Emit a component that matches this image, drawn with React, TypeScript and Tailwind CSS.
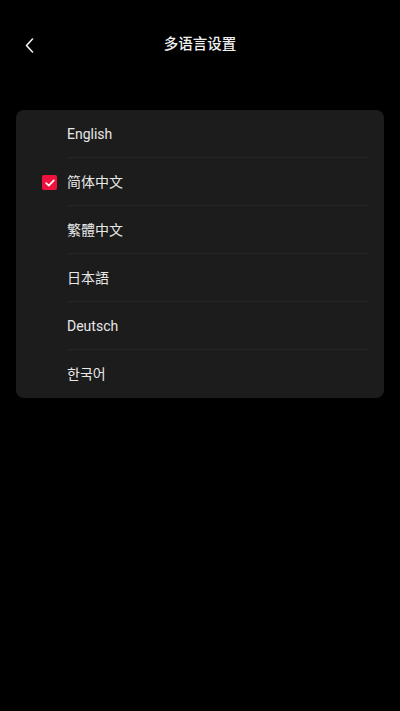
import { useState } from "react";

const languages = ["English", "简体中文", "繁體中文", "日本語", "Deutsch", "한국어"];

function App() {
  const [selected, setSelected] = useState("简体中文");

  return (
    <div
      className="min-h-[711px] w-full bg-black text-[#e8e8e8]"
      style={{ fontFamily: 'Roboto, "Noto Sans CJK SC", "Noto Sans CJK KR", sans-serif' }}
    >
      <div className="relative flex h-[90px] items-center justify-center">
        <button className="absolute left-[21px] top-[33px] flex h-6 w-4 items-center justify-center">
          <svg width="9" height="15" viewBox="0 0 9 15" fill="none">
            <path d="M7.5 1 1.5 7.5l6 6.5" stroke="#f2f2f2" strokeWidth="1.6" strokeLinecap="round" strokeLinejoin="round" />
          </svg>
        </button>
        <h1 className="text-[14.5px] font-medium text-[#f0f0f0]">多语言设置</h1>
      </div>

      <div className="mx-4 mt-5 overflow-hidden rounded-lg bg-[#1c1c1c]">
        {languages.map((lang, i) => (
          <div
            key={lang}
            onClick={() => setSelected(lang)}
            className="relative flex h-12 cursor-pointer items-center"
          >
            {selected === lang && (
              <span className="absolute left-[26px] top-[17px] flex h-[15px] w-[15px] items-center justify-center rounded-[2px] bg-[#f0123e]">
                <svg width="10" height="8" viewBox="0 0 10 8" fill="none">
                  <path d="M1.2 4.2 3.8 6.6 8.8 1.4" stroke="#fff" strokeWidth="1.7" strokeLinecap="round" strokeLinejoin="round" />
                </svg>
              </span>
            )}
            <div
              className={
                i < languages.length - 1
                  ? "ml-[51px] mr-4 flex h-full flex-1 items-center border-b border-[#252525] pt-px"
                  : "ml-[51px] mr-4 flex h-full flex-1 items-center pt-px"
              }
            >
              <span className="text-[14px]">{lang}</span>
            </div>
          </div>
        ))}
      </div>
    </div>
  );
}

export default App;
